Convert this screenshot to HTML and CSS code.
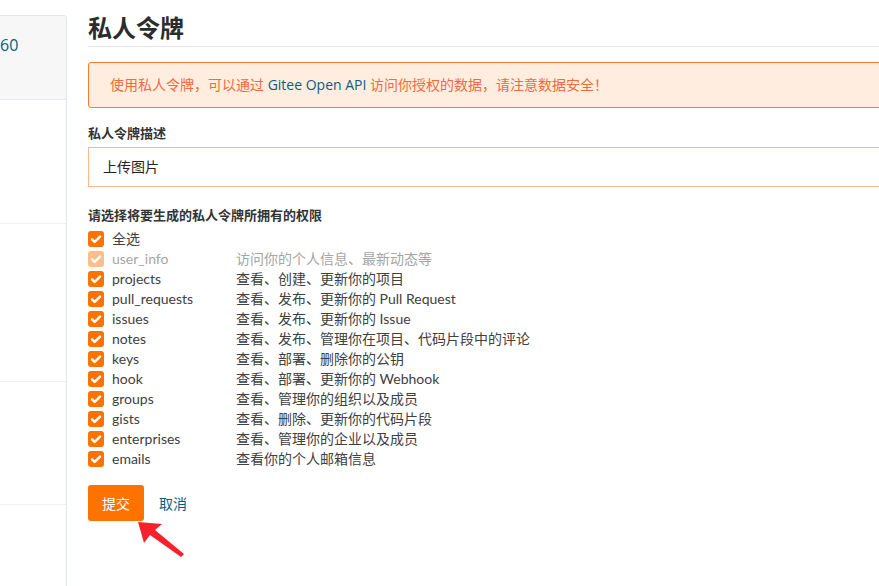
FILE: index.html
```html
<!DOCTYPE html>
<html lang="zh-CN">
<head>
<meta charset="utf-8">
<title>私人令牌</title>
<link rel="stylesheet" href="styles.css">
</head>
<body>
<div class="page">
  <aside class="sidebar">
    <div class="side-top"><span class="side-num">60</span></div>
    <div class="side-sec s1"></div>
    <div class="side-sec s2"></div>
    <div class="side-sec s3"></div>
    <div class="side-sec s4"></div>
  </aside>
  <main class="main">
    <h1 class="title">私人令牌</h1>
    <div class="alert">使用私人令牌，可以通过 <span class="link">Gitee Open API</span> 访问你授权的数据，请注意数据安全！</div>
    <div class="field-label">私人令牌描述</div>
    <div class="input">上传图片</div>
    <div class="field-label perm-label">请选择将要生成的私人令牌所拥有的权限</div>
    <ul class="perms">
      <li class="perm"><span class="cb"><svg viewBox="0 0 16 16"><path d="M4 8.3l2.7 2.6L12 5.6" /></svg></span><span class="name">全选</span></li>
      <li class="perm disabled"><span class="cb"><svg viewBox="0 0 16 16"><path d="M4 8.3l2.7 2.6L12 5.6" /></svg></span><span class="name">user_info</span><span class="desc">访问你的个人信息、最新动态等</span></li>
      <li class="perm"><span class="cb"><svg viewBox="0 0 16 16"><path d="M4 8.3l2.7 2.6L12 5.6" /></svg></span><span class="name">projects</span><span class="desc">查看、创建、更新你的项目</span></li>
      <li class="perm"><span class="cb"><svg viewBox="0 0 16 16"><path d="M4 8.3l2.7 2.6L12 5.6" /></svg></span><span class="name">pull_requests</span><span class="desc">查看、发布、更新你的 Pull Request</span></li>
      <li class="perm"><span class="cb"><svg viewBox="0 0 16 16"><path d="M4 8.3l2.7 2.6L12 5.6" /></svg></span><span class="name">issues</span><span class="desc">查看、发布、更新你的 Issue</span></li>
      <li class="perm"><span class="cb"><svg viewBox="0 0 16 16"><path d="M4 8.3l2.7 2.6L12 5.6" /></svg></span><span class="name">notes</span><span class="desc">查看、发布、管理你在项目、代码片段中的评论</span></li>
      <li class="perm"><span class="cb"><svg viewBox="0 0 16 16"><path d="M4 8.3l2.7 2.6L12 5.6" /></svg></span><span class="name">keys</span><span class="desc">查看、部署、删除你的公钥</span></li>
      <li class="perm"><span class="cb"><svg viewBox="0 0 16 16"><path d="M4 8.3l2.7 2.6L12 5.6" /></svg></span><span class="name">hook</span><span class="desc">查看、部署、更新你的 Webhook</span></li>
      <li class="perm"><span class="cb"><svg viewBox="0 0 16 16"><path d="M4 8.3l2.7 2.6L12 5.6" /></svg></span><span class="name">groups</span><span class="desc">查看、管理你的组织以及成员</span></li>
      <li class="perm"><span class="cb"><svg viewBox="0 0 16 16"><path d="M4 8.3l2.7 2.6L12 5.6" /></svg></span><span class="name">gists</span><span class="desc">查看、删除、更新你的代码片段</span></li>
      <li class="perm"><span class="cb"><svg viewBox="0 0 16 16"><path d="M4 8.3l2.7 2.6L12 5.6" /></svg></span><span class="name">enterprises</span><span class="desc">查看、管理你的企业以及成员</span></li>
      <li class="perm"><span class="cb"><svg viewBox="0 0 16 16"><path d="M4 8.3l2.7 2.6L12 5.6" /></svg></span><span class="name">emails</span><span class="desc">查看你的个人邮箱信息</span></li>
    </ul>
    <div class="actions">
      <button class="btn-submit">提交</button>
      <span class="cancel">取消</span>
    </div>
  </main>
  <svg class="arrow" viewBox="0 0 60 45" width="60" height="45">
    <polygon points="3,2 27,4 20,10 49,34 46,37 15,15 9,23" fill="#f5222d" />
  </svg>
</div>
</body>
</html>
```
FILE: styles.css
```css
html, body {
  margin: 0;
  padding: 0;
  overflow: hidden;
  background: #fff;
}
body {
  font-family: "Open Sans", "Noto Sans CJK SC", sans-serif;
  font-size: 14px;
  color: #404040;
}
.page {
  position: relative;
  display: flex;
  gap: 21px;
  height: 586px;
  width: 1000px;
}
.sidebar {
  flex: 0 0 auto;
  width: 66px;
  margin-left: -1px;
  margin-top: 15px;
  border: 1px solid #dfe6ec;
  border-bottom: none;
  border-top-right-radius: 4px;
  display: flex;
  flex-direction: column;
}
.side-top {
  height: 84px;
  background: #f7f7f7;
  border-top-right-radius: 4px;
  border-bottom: 1px solid #e8ecf0;
  padding-top: 19px;
  box-sizing: border-box;
}
.side-num {
  display: block;
  padding-left: 0;
  font-size: 16px;
  line-height: 20px;
  color: #0b5b85;
}
.side-sec { border-bottom: 1px solid #eef0f2; }
.s1 { height: 123px; }
.s2 { height: 157px; }
.s3 { height: 122px; }
.s4 { border-bottom: none; flex: 1; }

.main {
  width: 820px;
  padding-top: 12px;
}
.title {
  margin: 0;
  font-size: 24px;
  line-height: 32px;
  font-weight: 700;
  color: #2c2c2c;
  padding-bottom: 2px;
  border-bottom: 1px solid #e5e5e5;
}
.alert {
  margin-top: 15px;
  border: 1px solid #fc7a2c;
  border-radius: 3px;
  background: #ffeedf;
  padding: 12px 21px;
  line-height: 20px;
  color: #f5693a;
}
.link { color: #0b5b85; }
.field-label {
  margin-top: 15px;
  font-weight: 700;
  font-size: 13px;
  line-height: 20px;
  color: #333;
}
.input {
  margin-top: 4px;
  height: 40px;
  box-sizing: border-box;
  border: 1px solid #fdb98a;
  padding: 0 14px;
  line-height: 38px;
  color: #222;
}
.perm-label { margin-top: 18px; }
.perms {
  list-style: none;
  margin: 4px 0 0;
  padding: 0;
  font-family: "Lato", "Noto Sans CJK SC", sans-serif;
}
.perm {
  display: flex;
  align-items: center;
  height: 20px;
  line-height: 20px;
  color: #404040;
}
.cb {
  width: 16px;
  height: 16px;
  border-radius: 3px;
  background: #fe7300;
  display: flex;
  align-items: center;
  justify-content: center;
  margin-right: 8px;
}
.cb svg { width: 16px; height: 16px; }
.cb path {
  fill: none;
  stroke: #fff;
  stroke-width: 2.4;
  stroke-linecap: round;
  stroke-linejoin: round;
}
.name { width: 124px; }
.disabled { color: #a5a5a5; }
.disabled .cb { background: #ffbd89; }
.actions {
  margin-top: 16px;
  display: flex;
  align-items: center;
  gap: 15px;
}
.btn-submit {
  width: 56px;
  height: 36px;
  border: none;
  border-radius: 3px;
  background: #fe7300;
  color: #fff;
  font-family: "Open Sans", "Noto Sans CJK SC", sans-serif;
  font-size: 14px;
  padding: 0;
}
.cancel { color: #0b5b85; }
.arrow {
  position: absolute;
  left: 135px;
  top: 520px;
}
```
